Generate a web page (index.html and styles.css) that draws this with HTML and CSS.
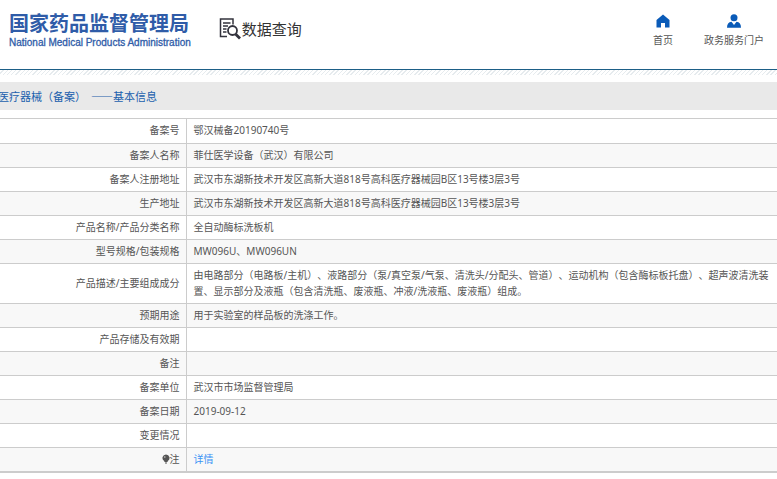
FILE: index.html
```
<!DOCTYPE html>
<html lang="zh-CN">
<head>
<meta charset="utf-8">
<title>数据查询</title>
<link rel="stylesheet" href="styles.css">
</head>
<body>
<header class="header">
  <div class="brand">
    <div class="brand-name">国家药品监督管理局</div>
    <div class="brand-en">National Medical Products Administration</div>
  </div>
  <div class="query">
    <svg class="query-icon" width="22" height="22" viewBox="0 0 22 22" fill="none" stroke="#33333d">
      <path d="M8 18.500H1.500V1H14V6.500" stroke-width="1.500"/>
      <path d="M4 5H11.500M4 8H9M4 11H7.500M4 14H7.500" stroke-width="1.300"/>
      <circle cx="13.500" cy="12.500" r="4.500" stroke-width="1.800"/>
      <path d="M16.500 16L21 20.500" stroke-width="2.800"/>
    </svg>
    <span>数据查询</span>
  </div>
  <nav class="nav">
    <a href="#"><svg width="14" height="14" viewBox="0 0 14 14" fill="#0a5bb8"><path d="M7 0.500L13.500 6V13.500H9V9H5V13.500H0.500V6Z"/></svg>首页</a>
    <a href="#"><svg width="14" height="14" viewBox="0 0 14 14" fill="#0a5bb8"><circle cx="7" cy="3.700" r="3.500"/><path d="M0 13.700C0 10 1.500 8 4.500 7.700L7 11L9.500 7.700C12.500 8 14 10 14 13.700Z"/></svg>政务服务门户</a>
  </nav>
</header>
<div class="hatch"></div>
<main>
  <h1 class="title"><span>医疗器械（备案）</span><span>——基本信息</span></h1>
  <table class="info">
    <colgroup><col class="label-col"><col></colgroup>
    <tbody>
    <tr><th scope="row">备案号</th><td>鄂汉械备20190740号</td></tr>
    <tr><th scope="row">备案人名称</th><td>菲仕医学设备（武汉）有限公司</td></tr>
    <tr><th scope="row">备案人注册地址</th><td>武汉市东湖新技术开发区高新大道818号高科医疗器械园B区13号楼3层3号</td></tr>
    <tr><th scope="row">生产地址</th><td>武汉市东湖新技术开发区高新大道818号高科医疗器械园B区13号楼3层3号</td></tr>
    <tr><th scope="row">产品名称/产品分类名称</th><td>全自动酶标洗板机</td></tr>
    <tr><th scope="row">型号规格/包装规格</th><td>MW096U、MW096UN</td></tr>
    <tr><th scope="row">产品描述/主要组成成分</th><td>由电路部分（电路板/主机）、液路部分（泵/真空泵/气泵、清洗头/分配头、管道）、运动机构（包含酶标板托盘）、超声波清洗装置、显示部分及液瓶（包含清洗瓶、废液瓶、冲液/洗液瓶、废液瓶）组成。</td></tr>
    <tr><th scope="row">预期用途</th><td>用于实验室的样品板的洗涤工作。</td></tr>
    <tr><th scope="row">产品存储及有效期</th><td></td></tr>
    <tr><th scope="row">备注</th><td></td></tr>
    <tr><th scope="row">备案单位</th><td>武汉市市场监督管理局</td></tr>
    <tr><th scope="row">备案日期</th><td>2019-09-12</td></tr>
    <tr><th scope="row">变更情况</th><td></td></tr>
    <tr><th scope="row"><svg class="bulb" width="8" height="10" viewBox="0 0 8 10" fill="#555"><path d="M4 0.500A3.500 3.500 0 0 1 5.800 7L5.500 8H2.500L2.200 7A3.500 3.500 0 0 1 4 0.500ZM3 8.400H5V9.500H3Z"/><circle cx="2.800" cy="3" r="0.800" fill="#ccc"/></svg>注</th><td><a href="#">详情</a></td></tr>
    </tbody>
  </table>
</main>
</body>
</html>
```

FILE: styles.css
```
body {
  margin: 0;
  background: #fff;
  color: #555;
  font: 10px/16px "Noto Sans", "Noto Sans CJK SC", sans-serif;
  text-spacing-trim: space-all;
  overflow-x: hidden;
}

.header {
  display: flex;
  align-items: flex-start;
  height: 69px;
  padding: 0 13px 0 9px;
  border-bottom: 1px solid #1d5f87;
}

.brand {
  padding-top: 12px;
  color: #2f5ca8;
  white-space: nowrap;
}

.brand-name {
  font-size: 20px;
  line-height: 24px;
  font-weight: 700;
}

.brand-en {
  font: 10px/14px "Liberation Sans", sans-serif;
  -webkit-text-stroke: 0.3px;
}

.query {
  display: flex;
  align-items: center;
  gap: 1px;
  margin-left: 28px;
  padding-top: 18px;
  color: #333;
  font-size: 15px;
  line-height: 22px;
}

.nav {
  display: flex;
  gap: 31px;
  margin-left: auto;
  padding-top: 14px;
}

.nav a {
  display: flex;
  flex-direction: column;
  align-items: center;
  gap: 4px;
  color: #555;
  text-decoration: none;
}

.hatch {
  height: 5px;
  background: repeating-linear-gradient(135deg, #fff 0 2px, #e6ebee 2px 3px);
}

.title {
  display: flex;
  gap: 5px;
  margin: 7px 0 8px -2px;
  background: #e9e9e9;
  color: #1a60ad;
  font: 400 11px/28px "Noto Sans CJK SC", sans-serif;
}

.info {
  width: 100%;
  table-layout: fixed;
  border-collapse: collapse;
  border-bottom: 2px solid #ccc;
}

.label-col {
  width: 186px;
}

.info tr:nth-child(even) {
  background: #f8f8f8;
}

.info th,
.info td {
  height: 16px;
  padding: 3px 4px 4px 7px;
  border-top: 1px solid #ccc;
  font-weight: 400;
  text-align: left;
}

.info tr:first-child > * {
  padding-bottom: 5px;
}

.info th {
  padding-right: 6px;
  border-right: 1px solid #ccc;
  text-align: right;
}

.info td a {
  color: #3b94f5;
  text-decoration: none;
}

.bulb {
  vertical-align: -1px;
}
```
